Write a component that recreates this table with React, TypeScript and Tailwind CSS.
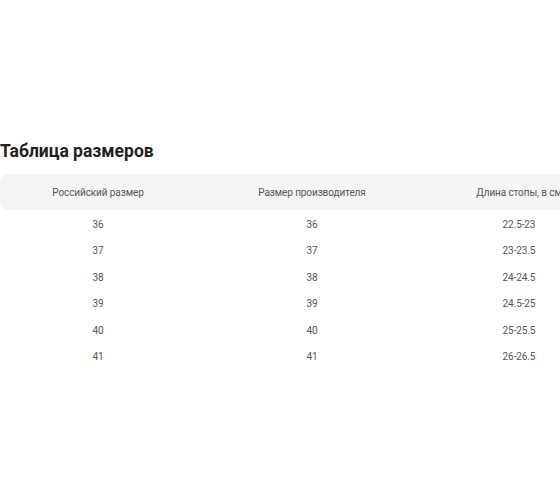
import React from "react";

const rows = [
  ["36", "36", "22.5-23"],
  ["37", "37", "23-23.5"],
  ["38", "38", "24-24.5"],
  ["39", "39", "24.5-25"],
  ["40", "40", "25-25.5"],
  ["41", "41", "26-26.5"],
];

const cols = "grid grid-cols-[196px_232px_182px]";

export default function App() {
  return (
    <div className="w-[560px] h-[504px] bg-white overflow-hidden" style={{ fontFamily: 'Roboto, "Liberation Sans", sans-serif' }}>
      <div className="pt-[140px]">
        <h2 className="text-[17.5px] leading-[22px] font-bold text-[#1f1f1f] h-[34px]">Таблица размеров</h2>
        <div className="w-[610px]">
          <div className={`${cols} h-[36px] items-center bg-[#f5f5f5] rounded-l-[8px] text-[10px] tracking-[-0.1px] text-[#555]`}>
            <div className="text-center">Российский размер</div>
            <div className="text-center">Размер производителя</div>
            <div className="text-center">Длина стопы, в см</div>
          </div>
          <div className="pt-[1px]">
            {rows.map((r, i) => (
              <div key={i} className={`${cols} h-[26.5px] items-center text-[10px] tracking-[-0.1px] text-[#555]`}>
                <div className="text-center">{r[0]}</div>
                <div className="text-center">{r[1]}</div>
                <div className="text-center">{r[2]}</div>
              </div>
            ))}
          </div>
        </div>
      </div>
    </div>
  );
}
